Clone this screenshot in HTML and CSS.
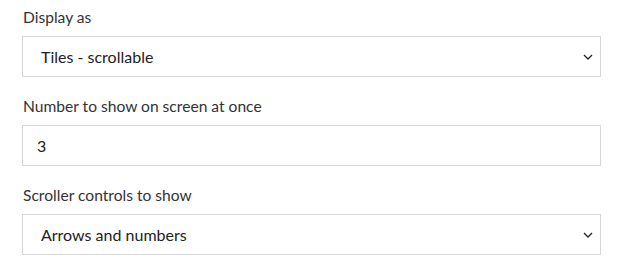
FILE: index.html
```html
<!DOCTYPE html>
<html>
<head>
<meta charset="utf-8">
<link rel="stylesheet" href="styles.css">
</head>
<body>
<div class="form">
  <div class="field">
    <div class="label">Display as</div>
    <div class="control select">
      <span class="value">Tiles - scrollable</span>
      <svg class="chev" width="10" height="6" viewBox="0 0 10 6"><path d="M1 1 L5 5 L9 1" fill="none" stroke="#222" stroke-width="1.3"/></svg>
    </div>
  </div>
  <div class="field">
    <div class="label">Number to show on screen at once</div>
    <div class="control input">
      <span class="value">3</span>
    </div>
  </div>
  <div class="field">
    <div class="label">Scroller controls to show</div>
    <div class="control select">
      <span class="value">Arrows and numbers</span>
      <svg class="chev" width="10" height="6" viewBox="0 0 10 6"><path d="M1 1 L5 5 L9 1" fill="none" stroke="#222" stroke-width="1.3"/></svg>
    </div>
  </div>
</div>
</body>
</html>
```
FILE: styles.css
```css
html, body {
  margin: 0;
  padding: 0;
  background: #ffffff;
}
body {
  font-family: Lato, "Open Sans", sans-serif;
  color: #333333;
}
.form {
  padding: 7px 23px 0 22px;
  display: flex;
  flex-direction: column;
  gap: 19px;
}
.field {
  display: flex;
  flex-direction: column;
  gap: 8px;
}
.label {
  font-size: 15.6px;
  line-height: 21px;
  color: #333333;
  padding-left: 1px;
}
.control {
  box-sizing: border-box;
  height: 41px;
  border: 1px solid #d6d6d6;
  display: flex;
  align-items: center;
  font-size: 16px;
  color: #222222;
}
.select {
  padding: 0 7px 0 18px;
  justify-content: space-between;
}
.input {
  padding-left: 14px;
}
.chev {
  display: block;
}
```
